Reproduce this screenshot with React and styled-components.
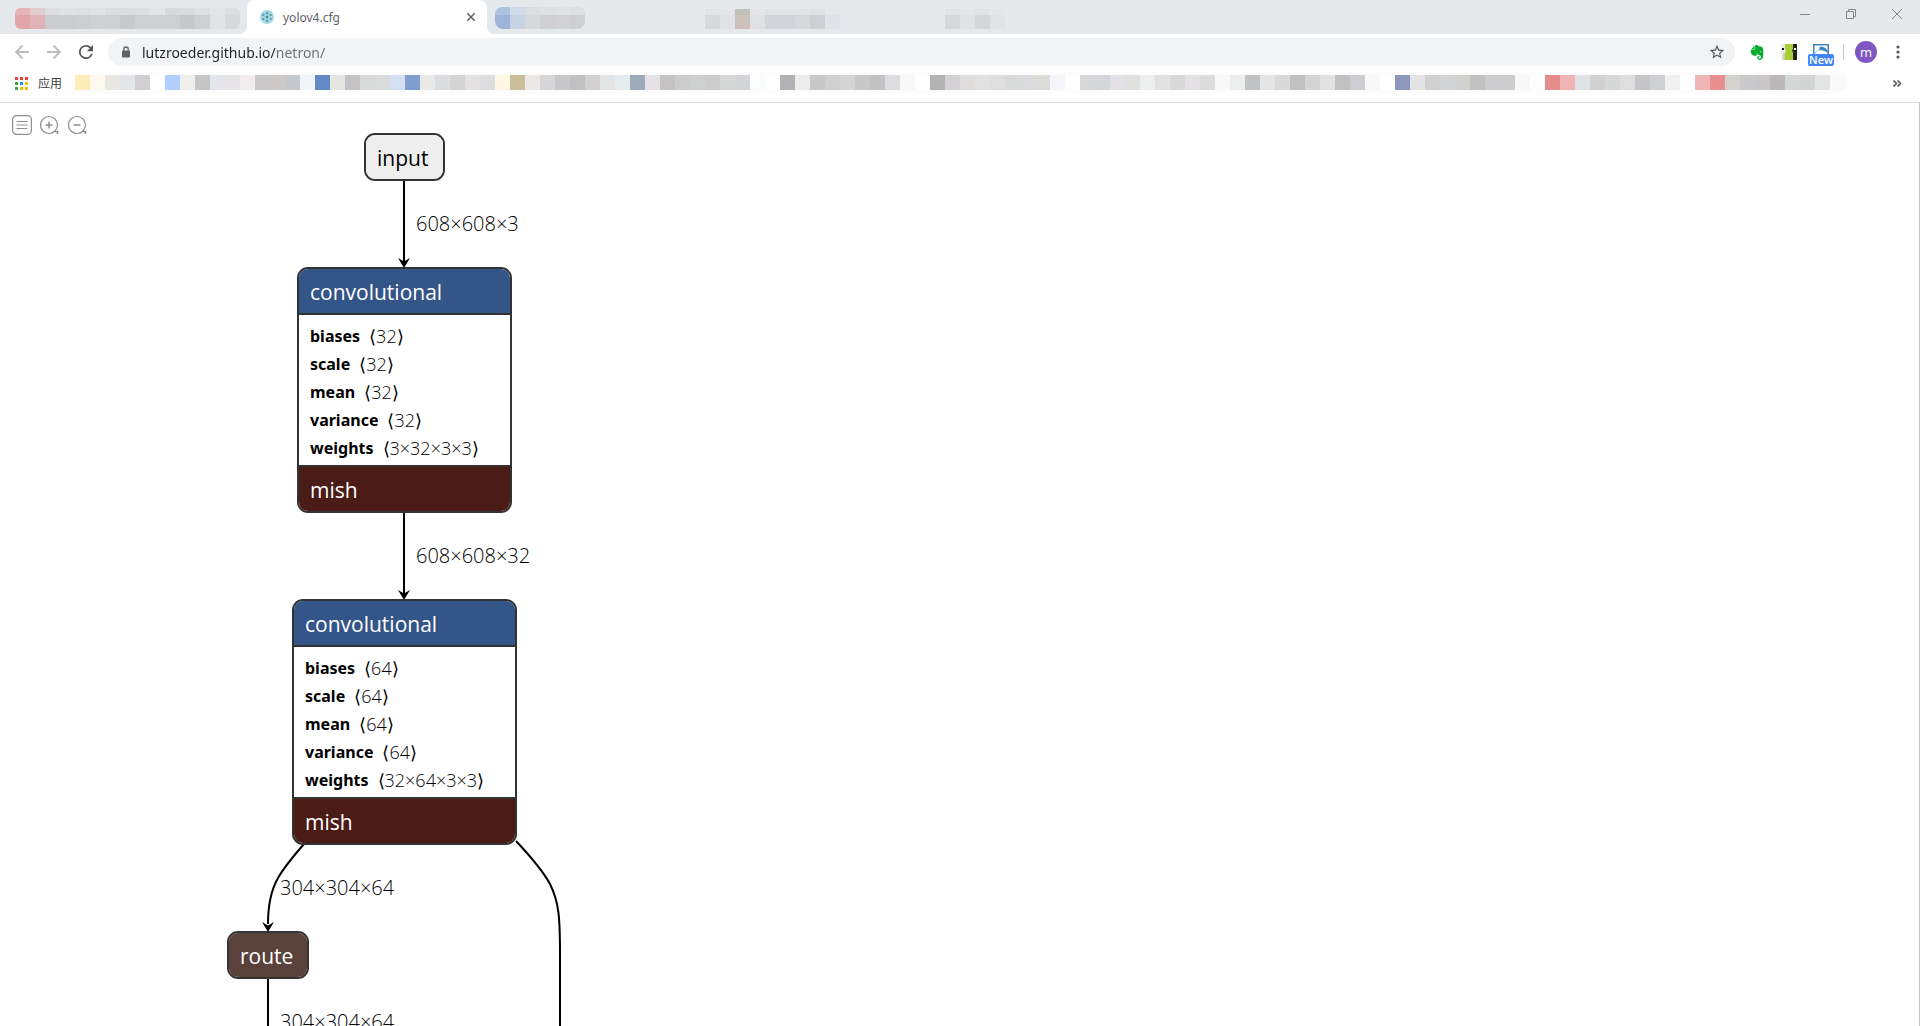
import React from "react";
import styled, { createGlobalStyle } from "styled-components";
import { FaEvernote } from "react-icons/fa";

const GlobalStyle = createGlobalStyle`
  *, *::before, *::after { box-sizing: border-box; }
  body {
    margin: 0;
    background: #fff;
    font-family: "Open Sans", "Noto Sans", "Noto Sans CJK SC", sans-serif;
  }
  button {
    border: 0;
    padding: 0;
    background: none;
    font: inherit;
    color: inherit;
  }
`;

const Browser = styled.div`
  display: flex;
  flex-direction: column;
  height: 100vh;
  overflow: hidden;
`;

/* ---------- tab strip ---------- */

const TabStrip = styled.nav`
  display: flex;
  height: 34px;
  flex: none;
  background: #e5e9ec;
`;

const Tab = styled.button`
  display: flex;
  align-items: flex-start;
  width: ${(p) => p.$width}px;
  padding: ${(p) => p.$top}px 0 0 ${(p) => p.$inset}px;
`;

const ActiveTab = styled.div`
  position: relative;
  display: flex;
  align-items: center;
  gap: 9px;
  width: 240px;
  padding: 0 8px 0 13px;
  background: #fff;
  border-radius: 8px 8px 0 0;
  font-family: "Noto Sans", sans-serif;
  font-size: 12px;
  line-height: 16px;
  color: #5f6368;

  &::before,
  &::after {
    content: "";
    position: absolute;
    bottom: 0;
    width: 8px;
    height: 8px;
  }
  &::before {
    right: 100%;
    background: radial-gradient(circle at 0 0, transparent 8px, #fff 8px);
  }
  &::after {
    left: 100%;
    background: radial-gradient(circle at 100% 0, transparent 8px, #fff 8px);
  }
`;

const TabTitle = styled.span`
  flex: 1;
  padding-top: 2px;
  text-align: left;
`;

const IconButton = styled.button`
  display: flex;
  align-items: center;
  justify-content: center;
  width: ${(p) => p.$width || 16}px;
  height: ${(p) => p.$height || 16}px;
`;

const WindowControls = styled.div`
  display: flex;
  margin-left: auto;
`;

const Mosaic = styled.span`
  display: flex;
  overflow: hidden;
  border-radius: ${(p) => p.$radius || 0}px;
`;

const Tile = styled.span`
  width: 15px;
  height: ${(p) => p.$height}px;
  border-top: ${(p) => p.$cap || 0}px solid ${(p) => p.$capColor || "transparent"};
  background: ${(p) => p.$color};
`;

/* ---------- address row ---------- */

const AddressRow = styled.div`
  display: flex;
  align-items: center;
  flex: none;
  height: 36px;
  padding: 0 14px 0 4px;
`;

const NavButtons = styled.div`
  display: flex;
  width: 104px;
`;

const Omnibox = styled.label`
  display: flex;
  align-items: center;
  flex: 1;
  height: 28px;
  margin-right: 14px;
  padding: 0 10px 0 13px;
  border-radius: 14px;
  background: #f1f3f4;
`;

const Url = styled.input`
  flex: 1;
  min-width: 0;
  height: 28px;
  margin-left: 11px;
  padding: 0;
  border: 0;
  outline: 0;
  font-family: "Noto Sans", sans-serif;
  font-size: 14px;
  background: linear-gradient(90deg, #202124 134px, #6b6f74 134px);
  background-clip: text;
  -webkit-background-clip: text;
  color: transparent;
`;

const Extensions = styled.div`
  display: flex;
  align-items: center;
  gap: 16px;
`;

const BadgeIcon = styled.button`
  position: relative;
  width: 16px;
  height: 16px;
  display: flex;
`;

const NewBadge = styled.span`
  position: absolute;
  top: 10px;
  left: -5px;
  width: 26px;
  height: 12px;
  border-radius: 2px;
  background: #4285f4;
  color: #fff;
  font-size: 11px;
  font-weight: 600;
  line-height: 12px;
  text-align: center;
`;

const Divider = styled.span`
  width: 1px;
  height: 16px;
  margin-left: -2px;
  background: #c9cccf;
`;

const Avatar = styled.button`
  width: 22px;
  height: 22px;
  margin: 0 -3px 0 -5px;
  border-radius: 50%;
  background: #7e57c2;
  color: #fff;
  font-size: 13px;
  line-height: 20px;
`;

/* ---------- bookmarks ---------- */

const BookmarksBar = styled.div`
  display: flex;
  align-items: center;
  flex: none;
  height: 33px;
  padding: 0 19px 8px 15px;
  border-bottom: 1px solid #d9dadc;
`;

const AppsButton = styled.button`
  display: flex;
  align-items: center;
  gap: 10px;
  width: 57px;
  padding-top: 3px;
  font-size: 12px;
  line-height: 16px;
  color: #3c4043;
`;

const BookmarkMosaic = styled.div`
  display: flex;
  padding: 3px;
  border-radius: 10px;
  background: #fcfcfc;
`;

const Overflow = styled.button`
  display: flex;
  margin-left: auto;
  padding-top: 3px;
`;

/* ---------- graph viewer ---------- */

const Viewer = styled.main`
  position: relative;
  flex: 1;
  overflow: hidden;
  border-right: 1px solid #c4c6c8;
`;

const ViewerTools = styled.div`
  position: absolute;
  top: 12px;
  left: 12px;
  display: flex;
  gap: 8px;
`;

const Edges = styled.svg`
  position: absolute;
  top: 0;
  left: 0;
  overflow: visible;
`;

const Node = styled.section`
  position: absolute;
  left: ${(p) => p.$x}px;
  top: ${(p) => p.$y}px;
  width: ${(p) => p.$width}px;
  overflow: hidden;
  border: 2px solid #333;
  border-radius: 11px;
`;

const fills = {
  input: ["#eeeeee", "#000"],
  layer: ["#335588", "#fff"],
  activation: ["#4b1b16", "#fff"],
  route: ["#59423b", "#fff"],
};

const NodeTitle = styled.div`
  height: 44px;
  padding: 1px 11px 0;
  font-size: 21px;
  line-height: 44px;
  background: ${(p) => fills[p.$kind][0]};
  color: ${(p) => fills[p.$kind][1]};
`;

const Attributes = styled.dl`
  margin: 0;
  padding: 7px 11px 3px;
  border-top: 2px solid #333;
  border-bottom: 2px solid #333;
  background: #fff;
  line-height: 28px;
`;

const Attribute = styled.div`
  display: flex;
  gap: 9px;
  height: 28px;
  white-space: nowrap;

  dt {
    font-family: "Noto Sans", sans-serif;
    font-size: 16px;
    font-weight: 700;
  }
  dd {
    margin: 0;
    font-size: 18px;
    font-weight: 300;
  }
`;

const EdgeLabel = styled.span`
  position: absolute;
  left: ${(p) => p.$x}px;
  top: ${(p) => p.$y}px;
  font-size: 20px;
  line-height: 28px;
  font-weight: 300;
  color: #000;
`;

const tile = (list) => list.trim().split(/\s+/).map((c) => "#" + c);

const firstTab = {
  top: tile("e3b5b8 e2cccf dadee0 dfe2e5 dde0e3 dfe3e6 d9dde0 dbdee1 dbdfe2 e1e5e8 d6dadd d9dcdf dce0e3 e1e5e8 dbdfe2"),
  body: tile("e3a5a7 dfb2b5 cacdd0 cacdd0 cccfd2 cfd2d4 cdd1d4 c7cacd ced1d3 ced1d3 ccd0d3 c6c9cc ced1d3 e0e4e7 d6dadd"),
};
const secondTab = {
  top: tile("afc2dd d2dbe8 dbdee1 dfe0e3 e0e2e4 dcdfe2"),
  body: tile("9cb4d8 c6d3e2 d6d8da d0cfd3 d2d2d5 cdcfd3"),
};
const thirdTab = {
  top: tile("e0e4e5 e3e6e8 bfc0b8 e4e5e7 e0e3e6 e1e3e6 e1e3e5 dfe2e5 e4e8eb"),
  body: tile("d6dadc e0e3e6 cdc2bb dfe1e4 d1d4d8 d1d4d8 d5d9db ccd0d3 dfe3e7"),
};
const fourthTab = {
  top: tile("e0e4e5 e3e6e8 dfe3e6 e4e8eb"),
  body: tile("d6d9db e0e3e6 d3d7da e0e4e7"),
};

const bookmarks = tile(`
  fcecb8 fdf9ee e9e7e5 e3e5e8 d1cfd2 ffffff b0cffd eeeeed c5c5c5 e3e6ea
  e8e5e9 f1edef cbc8ca cdc9c6 c4c8cb f1f5fa 6288c5 e5e5e4 c5c2c5 d9dbda
  dadcdb d4e0f1 809ece e9e9e8 dbdcdf d4d4d5 e3e1e2 dddddd fef7e6 c9be9a
  ece8e5 d6d6d9 cac7ca c1c1c3 d2d0d1 e2e4e6 e6ebef 9daaba e4e2e4 c5c2c4
  cccccd cdd0cf cccccd d5d6d6 d3d4d7 fafdfc ffffff b0b1b4 ececea c8c8c9
  d0d0d0 d4d4d5 c8c8c9 c3c1c3 dcdde0 f8f8f8 ffffff b3b3b4 d3d1d3 dfdddb
  e1e1e1 dededf d9dada dadbde dcddd9 f4f6f9 ffffff d6d8da d4d6d9 e3e1e5
  e0e1de edefee e1e1e1 dad9da e3e1e3 dcdcdc f8f8f8 eceeed c1c2c4 e5e5e5
  d9d9d9 c0c0c0 d6d3d5 e1e1e1 c1c1c1 cdced3 f8f8f8 ffffff 8e98bd e3e3e3
  d0d0d0 d2d3d5 d1d2ce c1c1c1 cdcdcf cdcdcd f8f8f8 ffffff e78b8b f0b4b4
  dfe2e6 d1d1d1 d6d7d8 dedede c5c5c7 cfd0d3 f0f0f0 ffffff f0b4b7 e89090
  d3d2cf cacacd cac7c9 bcb8ba d4d6d7 d1d4d2 e3e5e4 f9f9f9
`);

function TabMosaic({ data, cap, radius }) {
  return (
    <Mosaic $radius={radius}>
      {data.body.map((c, i) => (
        <Tile key={i} $color={c} $cap={cap} $capColor={data.top[i]} $height={cap + 14} />
      ))}
    </Mosaic>
  );
}

function Favicon() {
  return (
    <svg width="14" height="14" viewBox="0 0 14 14">
      <circle cx="7" cy="7" r="7" fill="#a3d9e4" />
      <g stroke="#6fb0be" strokeWidth=".5">
        <path d="M3 5 7 3l4 2M3 9l4 2 4-2M3 5l4 2 4-2M3 9l4-2 4 2M7 3v8" fill="none" />
      </g>
      <g fill="#2f7385">
        <circle cx="3" cy="5" r=".8" /><circle cx="3" cy="9" r=".8" />
        <circle cx="7" cy="3" r=".8" /><circle cx="7" cy="7" r="1" /><circle cx="7" cy="11" r=".8" />
        <circle cx="11" cy="5" r=".8" /><circle cx="11" cy="9" r=".8" />
      </g>
    </svg>
  );
}

function Arrow({ flip }) {
  return (
    <svg width="14" height="14" viewBox="0 0 14 14" fill="none" stroke="#babcbe" strokeWidth="1.9">
      <path d={flip ? "M0 7H13M6.5 .7 12.8 7 6.5 13.3" : "M14 7H1M7.5 .7 1.2 7l6.3 6.3"} />
    </svg>
  );
}

function AppsGrid() {
  const colors = ["#ea4335", "#ea4335", "#ea4335", "#34a853", "#2196f3", "#fbbc04", "#34a853", "#fbbc04", "#fbbc04"];
  return (
    <svg width="13" height="13" viewBox="0 0 13 13">
      {colors.map((c, i) => (
        <rect key={i} x={(i % 3) * 5} y={Math.floor(i / 3) * 5} width="3" height="3" fill={c} />
      ))}
    </svg>
  );
}

function ZoomIcon({ plus }) {
  return (
    <svg width="20" height="20" viewBox="0 0 20 20" fill="none" stroke="#8f8f8f">
      <circle cx="9" cy="10" r="8.5" strokeWidth="1.2" />
      <path d="M14.5 16.5h3v2.500" strokeWidth="1.5" />
      <path d={plus ? "M5.5 10h7M9 6.500v7" : "M5.5 10h7"} strokeWidth="1.5" />
    </svg>
  );
}

const arrowHead = (x, y) => `M${x} ${y}l-6-10 6 3.5 6-3.5z`;

function Layer({ x, y, width, channels, weights }) {
  const rows = [
    ["biases", channels],
    ["scale", channels],
    ["mean", channels],
    ["variance", channels],
    ["weights", weights],
  ];
  return (
    <Node $x={x} $y={y} $width={width}>
      <NodeTitle $kind="layer">convolutional</NodeTitle>
      <Attributes>
        {rows.map(([name, value]) => (
          <Attribute key={name}>
            <dt>{name}</dt>
            <dd>⟨{value}⟩</dd>
          </Attribute>
        ))}
      </Attributes>
      <NodeTitle $kind="activation">mish</NodeTitle>
    </Node>
  );
}

export default function App() {
  return (
    <Browser>
      <GlobalStyle />
      <TabStrip>
        <Tab $width={247} $inset={15} $top={8} aria-label="Tab 1">
          <TabMosaic data={firstTab} cap={7} radius={6} />
        </Tab>
        <ActiveTab>
          <Favicon />
          <TabTitle>yolov4.cfg</TabTitle>
          <IconButton aria-label="Close tab">
            <svg width="8" height="8" viewBox="0 0 8 8" stroke="#5f6368" strokeWidth="1.5">
              <path d="M0 0l8 8M8 0 0 8" />
            </svg>
          </IconButton>
        </ActiveTab>
        <Tab $width={210} $inset={8} $top={7} aria-label="Tab 3">
          <TabMosaic data={secondTab} cap={8} radius={8} />
        </Tab>
        <Tab $width={240} $inset={8} $top={9} aria-label="Tab 4">
          <TabMosaic data={thirdTab} cap={6} />
        </Tab>
        <Tab $width={80} $inset={8} $top={9} aria-label="Tab 5">
          <TabMosaic data={fourthTab} cap={6} />
        </Tab>
        <WindowControls>
          <IconButton $width={46} $height={28} aria-label="Minimize">
            <svg width="10" height="10" viewBox="0 0 10 10" stroke="#85888b"><path d="M0 5.5h10" /></svg>
          </IconButton>
          <IconButton $width={46} $height={28} aria-label="Restore">
            <svg width="10" height="10" viewBox="0 0 10 10" fill="none" stroke="#85888b">
              <path d="M.5 2.5h7v7h-7zM2.5 2.5v-2h7v7h-2" />
            </svg>
          </IconButton>
          <IconButton $width={46} $height={28} aria-label="Close window">
            <svg width="10" height="10" viewBox="0 0 10 10" stroke="#85888b"><path d="M0 0l10 10M10 0 0 10" /></svg>
          </IconButton>
        </WindowControls>
      </TabStrip>

      <AddressRow>
        <NavButtons>
          <IconButton $width={36} $height={28} aria-label="Back"><Arrow /></IconButton>
          <IconButton $width={28} $height={28} aria-label="Forward"><Arrow flip /></IconButton>
          <IconButton $width={36} $height={28} aria-label="Reload">
            <svg width="14" height="14" viewBox="4 4 16 16" fill="#54585c">
              <path d="M17.65 6.35A7.96 7.96 0 0 0 12 4a8 8 0 1 0 7.73 10h-2.08A6 6 0 1 1 12 6c1.66 0 3.14.69 4.22 1.78L13 11h7V4z" />
            </svg>
          </IconButton>
        </NavButtons>
        <Omnibox>
          <svg width="10" height="12" viewBox="0 0 10 12">
            <path d="M2.8 5V3.2a2.2 2.2 0 0 1 4.4 0V5" fill="none" stroke="#5f6368" strokeWidth="1.3" />
            <rect x="1" y="4.5" width="8" height="7" rx="1" fill="#5f6368" />
          </svg>
          <Url aria-label="Address" defaultValue="lutzroeder.github.io/netron/" />
          <IconButton aria-label="Bookmark this page">
            <svg width="16" height="16" viewBox="1 1 22 22" fill="#54585c">
              <path d="M22 9.24l-7.19-.62L12 2 9.19 8.63 2 9.24l5.46 4.73L5.82 21 12 17.27 18.18 21l-1.63-7.03zM12 15.4l-3.76 2.27 1-4.28-3.32-2.88 4.38-.38L12 6.1l1.71 4.04 4.38.38-3.32 2.88 1 4.28z" />
            </svg>
          </IconButton>
        </Omnibox>
        <Extensions>
          <IconButton aria-label="Evernote"><FaEvernote size={17} color="#05ac30" /></IconButton>
          <IconButton aria-label="Extension">
            <svg width="16" height="16" viewBox="0 0 16 16">
              <rect width="16" height="16" fill="#a9cf38" />
              <path d="M0 0h4v5l1 2-1 1v8H0z" fill="#eeeee8" />
              <path d="M12 0h4v16h-4V8l-1-1 1-2z" fill="#20241a" />
              <path d="M4 9v7H2v-6z" fill="#c9cbb8" />
              <rect x="1" y="4" width="2" height="2" fill="#111" />
              <rect x="13" y="4" width="2" height="2" fill="#fff" />
            </svg>
          </IconButton>
          <BadgeIcon aria-label="Extension with updates">
            <svg width="16" height="16" viewBox="0 0 16 16">
              <rect x=".75" y=".75" width="14.5" height="12" fill="#fff" stroke="#3f86bf" strokeWidth="1.5" />
              <path d="M6.500 3c4-1 8 1 9 7C13 7 10 6 6 6z" fill="#3f86bf" />
              <path d="M2 10c1-3 2-4 5-4" fill="none" stroke="#a9cbe6" />
            </svg>
            <NewBadge>New</NewBadge>
          </BadgeIcon>
          <Divider />
          <Avatar aria-label="Profile m">m</Avatar>
          <IconButton aria-label="Menu">
            <svg width="4" height="14" viewBox="0 0 4 14" fill="#54585c">
              <circle cx="2" cy="2" r="1.6" /><circle cx="2" cy="7" r="1.6" /><circle cx="2" cy="12" r="1.6" />
            </svg>
          </IconButton>
        </Extensions>
      </AddressRow>

      <BookmarksBar>
        <AppsButton><AppsGrid />应用</AppsButton>
        <BookmarkMosaic>
          {bookmarks.map((c, i) => <Tile key={i} $color={c} $height={15} />)}
        </BookmarkMosaic>
        <Overflow aria-label="More bookmarks">
          <svg width="8" height="7" viewBox="0 0 8 7" fill="none" stroke="#54585c" strokeWidth="1.6">
            <path d="M.5.5l3 3-3 3M4.5.5l3 3-3 3" />
          </svg>
        </Overflow>
      </BookmarksBar>

      <Viewer>
        <Edges width="600" height="940" fill="none" stroke="#000" strokeWidth="2">
          <path d="M404 78V161M404 410V492" />
          <path d="M304 741C290 757 282 768 278 775 270 789 268 803 268 821" />
          <path d="M516 738C532 755 544 770 550 781 559 799 560 815 560 850V940" />
          <path d="M268 875V940" />
          <g fill="#000" stroke="none">
            <path d={arrowHead(404, 165)} />
            <path d={arrowHead(404, 497)} />
            <path d={arrowHead(268, 829)} />
          </g>
        </Edges>

        <Node $x={364} $y={30} $width={81}>
          <NodeTitle $kind="input">input</NodeTitle>
        </Node>
        <EdgeLabel $x={416} $y={107}>608×608×3</EdgeLabel>
        <Layer x={297} y={164} width={215} channels="32" weights="3×32×3×3" />
        <EdgeLabel $x={416} $y={439}>608×608×32</EdgeLabel>
        <Layer x={292} y={496} width={225} channels="64" weights="32×64×3×3" />
        <EdgeLabel $x={280} $y={771}>304×304×64</EdgeLabel>
        <Node $x={227} $y={828} $width={82}>
          <NodeTitle $kind="route">route</NodeTitle>
        </Node>
        <EdgeLabel $x={280} $y={905}>304×304×64</EdgeLabel>

        <ViewerTools>
          <IconButton $width={20} $height={20} aria-label="Model properties">
            <svg width="20" height="20" viewBox="0 0 20 20" fill="none" stroke="#8f8f8f">
              <rect x=".6" y=".6" width="18.8" height="18.8" rx="4" strokeWidth="1.2" />
              <path d="M4.5 6.500h11M4.5 10h11M4.5 13.500h11" strokeWidth="1.2" />
            </svg>
          </IconButton>
          <IconButton $width={20} $height={20} aria-label="Zoom in"><ZoomIcon plus /></IconButton>
          <IconButton $width={20} $height={20} aria-label="Zoom out"><ZoomIcon /></IconButton>
        </ViewerTools>
      </Viewer>
    </Browser>
  );
}
